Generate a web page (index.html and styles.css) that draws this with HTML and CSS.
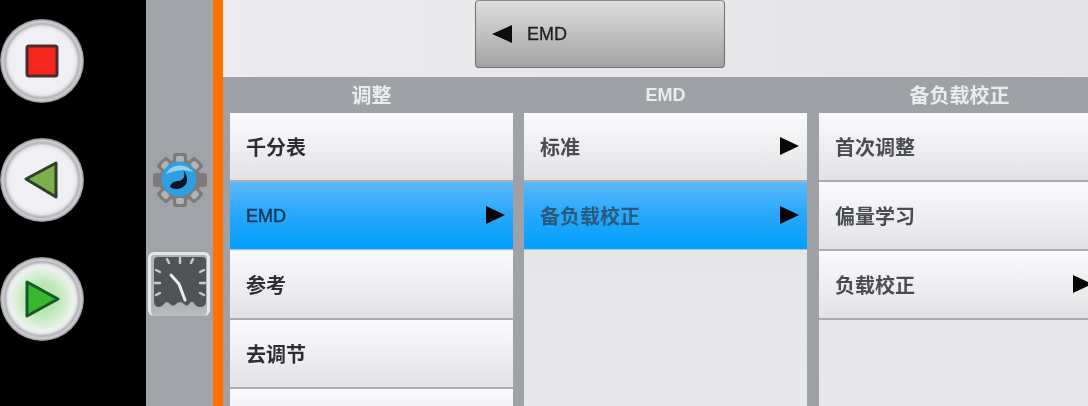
FILE: index.html
```html
<!DOCTYPE html>
<html lang="zh">
<head>
<meta charset="utf-8">
<title>EMD</title>
<link rel="stylesheet" href="styles.css">
</head>
<body>
<div class="app">
  <nav class="rail">
    <div class="round">
      <svg width="34" height="34" viewBox="0 0 34 34"><rect x="2" y="2" width="30" height="30" rx="2" fill="#f5261e" stroke="#4f2a28" stroke-width="3"/></svg>
    </div>
    <div class="round">
      <svg width="36" height="40" viewBox="0 0 36 40"><path d="M2 19 L32 3 V37 Z" fill="#7bb04c" stroke="#2f3f2a" stroke-width="3" stroke-linejoin="round"/></svg>
    </div>
    <div class="round round-go">
      <svg width="36" height="40" viewBox="0 0 36 40"><path d="M3 3 L34 20 L3 37 Z" fill="#38b82c" stroke="#17582a" stroke-width="3" stroke-linejoin="round"/></svg>
    </div>
  </nav>
  <aside class="tools">
    <svg class="gear" width="56" height="56" viewBox="0 0 56 56">
      <g fill="#7f7b7b">
        <circle cx="28" cy="28" r="21"/>
        <rect x="21" y="1" width="14" height="12" rx="3"/>
        <rect x="21" y="43" width="14" height="12" rx="3"/>
        <rect x="1" y="21" width="12" height="14" rx="3"/>
        <rect x="43" y="21" width="12" height="14" rx="3"/>
        <rect x="21" y="1" width="14" height="12" rx="3" transform="rotate(45 28 28)"/>
        <rect x="21" y="43" width="14" height="12" rx="3" transform="rotate(45 28 28)"/>
        <rect x="1" y="21" width="12" height="14" rx="3" transform="rotate(45 28 28)"/>
        <rect x="43" y="21" width="12" height="14" rx="3" transform="rotate(45 28 28)"/>
      </g>
      <g fill="#b3b4b6">
        <rect x="24" y="4" width="8" height="6" rx="2"/>
        <rect x="24" y="46" width="8" height="6" rx="2"/>
        <rect x="24" y="4" width="8" height="6" rx="2" transform="rotate(45 28 28)"/>
        <rect x="24" y="46" width="8" height="6" rx="2" transform="rotate(45 28 28)"/>
        <rect x="24" y="4" width="8" height="6" rx="2" transform="rotate(-45 28 28)"/>
        <rect x="24" y="46" width="8" height="6" rx="2" transform="rotate(-45 28 28)"/>
      </g>
      <circle cx="27" cy="27" r="17.5" fill="#2f9fe0"/>
      <path d="M14 22 C18 12 34 10 41 20 C32 17 24 18 14 22Z" fill="#93d3f2"/>
      <path d="M31 18 C34 23 32 28 27 29 C22 29 19 31 18 35 C22 38 30 38 34 32 C36 28 35 22 31 18Z" fill="#0b1420"/>
    </svg>
    <div class="clock-box">
      <svg width="52" height="51" viewBox="0 0 52 51">
        <path d="M4 0 H48 Q52 0 52 4 V44 Q52 50 46 50 Q42 50 40 46 Q38 43 35 47 Q33 50 30 47 Q26 43 22 47 Q19 50 16 47 Q13 43 10 47 Q8 50 5 50 Q0 50 0 44 V4 Q0 0 4 0Z" fill="#515356"/>
        <g stroke="#c9cacb" stroke-width="2.5" stroke-linecap="round">
          <path d="M26 1 V6"/><path d="M13 2 L15 6"/><path d="M39 2 L37 6"/>
          <path d="M2 13 L6 15"/><path d="M50 13 L46 15"/>
          <path d="M1 26 H6"/><path d="M51 26 H46"/>
          <path d="M2 38 L6 36"/><path d="M50 38 L46 36"/>
        </g>
        <path d="M17 18 L25 27 L31 43" fill="none" stroke="#eceded" stroke-width="3" stroke-linecap="round" stroke-linejoin="round"/>
      </svg>
    </div>
  </aside>
  <div class="accent"></div>
  <main class="main">
    <header class="topbar">
      <button class="back" type="button"><span class="back-arrow"></span><span class="soft">EMD</span></button>
    </header>
    <div class="columns">
      <section class="col">
        <h2 class="col-title"><span class="soft">调整</span></h2>
        <div class="list">
          <div class="row"><span class="soft">千分表</span></div>
          <div class="row row-on"><span class="soft latin">EMD</span><i class="arrow"></i></div>
          <div class="row"><span class="soft">参考</span></div>
          <div class="row"><span class="soft">去调节</span></div>
          <div class="row"></div>
        </div>
      </section>
      <section class="col">
        <h2 class="col-title"><span class="soft latin">EMD</span></h2>
        <div class="list">
          <div class="row"><span class="soft dim">标准</span><i class="arrow"></i></div>
          <div class="row row-on"><span class="soft dim">备负载校正</span><i class="arrow"></i></div>
        </div>
      </section>
      <section class="col">
        <h2 class="col-title"><span class="soft">备负载校正</span></h2>
        <div class="list">
          <div class="row"><span class="soft dim">首次调整</span></div>
          <div class="row"><span class="soft dim">偏量学习</span></div>
          <div class="row"><span class="soft dim">负载校正</span><i class="arrow"></i></div>
        </div>
      </section>
    </div>
  </main>
</div>
</body>
</html>
```
FILE: styles.css
```css
* { box-sizing: border-box; }
html, body { margin: 0; height: 100%; overflow: hidden; }
body { font-family: "Liberation Sans", "Noto Sans CJK SC", sans-serif; background: #000; }

.app { display: flex; width: 1088px; height: 406px; overflow: hidden; }

.rail {
  flex: 0 0 146px;
  background: #000;
  display: flex;
  flex-direction: column;
  gap: 35px;
  padding: 19px 0 0 0;
}
.round {
  width: 84px;
  height: 84px;
  border-radius: 50%;
  display: flex;
  align-items: center;
  justify-content: center;
  background: radial-gradient(closest-side, #efeff4 0 76%, #e6e6ea 82%, #b4b5b8 88%, #cfd0d2 94%, #87888b 100%);
  filter: blur(0.6px);
}
.round-go { background: radial-gradient(closest-side, #b9e6b2 0 34%, #d4eed0 58%, #edf2ed 76%, #e6e6ea 82%, #b4b5b8 88%, #cfd0d2 94%, #87888b 100%); }

.tools {
  flex: 0 0 67px;
  background: #a0a4a8;
  display: flex;
  flex-direction: column;
  align-items: center;
  gap: 44px;
  padding-top: 152px;
}
.gear { flex: none; filter: blur(0.7px); }
.clock-box {
  width: 62px;
  height: 64px;
  margin-left: -1px;
  padding: 2px 0 0 3px;
  border: 3px solid #e6e7e8;
  border-bottom: 0;
  border-radius: 6px;
  background: linear-gradient(#b0b2b4 0 85%, #bcbec0 100%);
  filter: blur(0.6px);
}
.clock-box svg { display: block; }

.accent { flex: 0 0 10px; background: #ff7200; }

.main {
  flex: 1;
  min-width: 0;
  display: flex;
  flex-direction: column;
  background: #9ea2a6;
  overflow: hidden;
}
.topbar {
  flex: 0 0 77px;
  background: linear-gradient(90deg, #ececee, #e3e3e5);
  padding-left: 252px;
}
.back {
  display: flex;
  align-items: center;
  gap: 15px;
  width: 250px;
  height: 68px;
  padding: 0 0 0 16px;
  border: 1px solid #6f7072;
  border-top-color: #8b8c8e;
  border-radius: 4px;
  background: linear-gradient(#dededf 0, #c9c9ca 35%, #a3a3a4 100%);
  font: inherit;
  font-size: 18px;
  color: #1f1f1f;
  -webkit-text-stroke: 0.3px #1f1f1f;
}
.back-arrow {
  width: 0;
  height: 0;
  border-style: solid;
  border-width: 9px 20px 9px 0;
  border-color: transparent #0c0c0c transparent transparent;
}

.columns {
  flex: 1;
  display: flex;
  gap: 11px;
  padding-left: 7px;
  min-height: 0;
}
.col {
  flex: 0 0 283px;
  display: flex;
  flex-direction: column;
}
.col:last-child { flex-basis: 281px; margin-left: 1px; }
.col-title {
  flex: 0 0 36px;
  margin: 0;
  padding-top: 1px;
  display: flex;
  align-items: center;
  justify-content: center;
  font-size: 20px;
  font-weight: 700;
  line-height: 1.2;
  color: #eaebec;
}
.list {
  flex: 1;
  background: linear-gradient(#e4e4e6, #e8e8ea);
  overflow: hidden;
}
.row {
  height: 69px;
  display: flex;
  align-items: center;
  justify-content: space-between;
  padding: 2px 8px 0 16px;
  border-bottom: 2px solid #ababad;
  background: linear-gradient(#fafafc 0, #f0f0f2 45%, #e2e2e4 100%);
  font-size: 20px;
  font-weight: 700;
  line-height: 1.2;
  color: #2c2e30;
}
.row-on {
  background: linear-gradient(#5cb8fb 0, #2aa8fc 45%, #00a0fe 100%);
  border-top: 1px solid #a9b4b8;
  border-bottom: 1px solid #9fc7e0;
  margin-top: -1px;
  margin-bottom: 1px;
  color: #123650;
}
.soft { filter: blur(0.6px); display: inline-block; }
.latin { font-size: 18px; }
.row .latin { font-weight: 400; -webkit-text-stroke: 0.4px #123650; }
.dim { color: #4a4d50; }
.row-on .dim { color: #2a5a7c; }
.arrow {
  width: 0;
  height: 0;
  margin-bottom: 4px;
  border-style: solid;
  border-width: 9px 0 9px 19px;
  border-color: transparent transparent transparent #060606;
}
```
